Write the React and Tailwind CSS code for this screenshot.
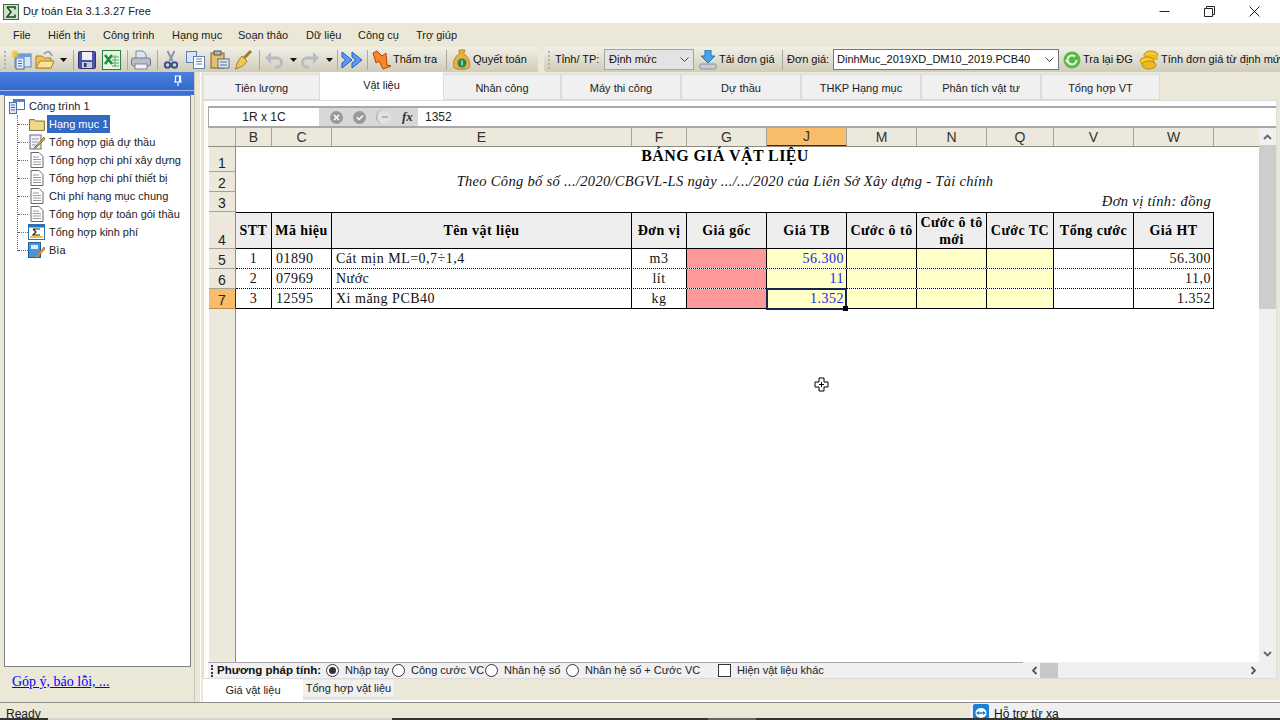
import React from "react";

const font = "font-['Liberation_Sans',Arial,sans-serif]";
const serif = "font-['Liberation_Serif','Times_New_Roman',serif]";

const Sigma = ({ s = 16 }) => (
  <svg width={s} height={s} viewBox="0 0 16 16"><rect x=".5" y=".5" width="15" height="15" fill="#cfe3c8" stroke="#3f6a3f" /><path d="M4 3h8v2.5M4 3l4 5-4 5h8v-2.5" fill="none" stroke="#1f4d1f" strokeWidth="1.6" /></svg>
);
const NewDoc = () => (
  <svg width="22" height="20" viewBox="0 0 22 20"><rect x="5" y="4" width="16" height="13" fill="#d8e6f5" stroke="#5f86b8" /><rect x="5" y="4" width="16" height="3" fill="#6f9bd0" /><rect x="6" y="8" width="8" height="11" fill="#e8f0fa" stroke="#3f6aa8" /><path d="M8 11h4M8 13.500h4M8 16h4" stroke="#3f6aa8" /><path d="M5 0v8M1 4h8M2 1l6 6M8 1L2 7" stroke="#f5c432" strokeWidth="1.200" /></svg>
);
const OpenFolder = () => (
  <svg width="20" height="20" viewBox="0 0 20 20"><path d="M1 6h6l2 2h7v10H1z" fill="#f0c35a" stroke="#a9802a" /><path d="M1 18l4-7h14l-3 7z" fill="#fbe39a" stroke="#a9802a" /><path d="M9 4c2-3 6-3 7 0l1 2" fill="none" stroke="#7e94a9" strokeWidth="1.400" /></svg>
);
const Caret = ({ c = "#111" }) => (
  <svg width="7" height="4" viewBox="0 0 7 4"><path d="M0 0h7L3.500 4z" fill={c} /></svg>
);
const Save = () => (
  <svg width="18" height="18" viewBox="0 0 18 18"><rect x=".5" y=".5" width="17" height="17" rx="1" fill="#4a55a8" stroke="#2d3370" /><rect x="4" y="1" width="10" height="8" fill="#eef1fa" /><rect x="4" y="11" width="10" height="6" fill="#c6cbd4" /><rect x="6" y="12" width="2.500" height="4" fill="#2d3370" /></svg>
);
const Excel = () => (
  <svg width="20" height="20" viewBox="0 0 20 20"><rect x="1.500" y=".5" width="18" height="19" fill="#e7f4e4" stroke="#2d7d3c" /><path d="M11 7h7M11 10h7M11 13h7M11 16h7M14 5v12" stroke="#5aa868" /><path d="M4 5l7 9M11 5l-7 9" stroke="#1f8a3b" strokeWidth="2.600" /></svg>
);
const Printer = () => (
  <svg width="20" height="20" viewBox="0 0 20 20"><path d="M5 1h7l3 3v5H5z" fill="#d9e6f5" stroke="#7d8795" /><rect x=".5" y="8" width="19" height="8" rx="2" fill="#b9c0ca" stroke="#6f7886" /><rect x="4" y="14" width="12" height="5" fill="#f2f3f5" stroke="#7d8795" /></svg>
);
const Cut = () => (
  <svg width="14" height="20" viewBox="0 0 14 20"><path d="M3.500 1l5 10M10.500 1l-5 10" stroke="#8b95a3" strokeWidth="2" /><circle cx="3.500" cy="15" r="2.800" fill="none" stroke="#35508f" strokeWidth="2" /><circle cx="10.500" cy="15" r="2.800" fill="none" stroke="#35508f" strokeWidth="2" /></svg>
);
const Copy = () => (
  <svg width="19" height="18" viewBox="0 0 19 18"><rect x=".5" y=".5" width="10" height="11" fill="#d9e5f5" stroke="#5f7fb5" /><rect x="7.500" y="5.500" width="11" height="12" fill="#fff" stroke="#5f7fb5" /><path d="M10 8h6M10 10.500h6M10 13h6" stroke="#5f7fb5" /></svg>
);
const Paste = () => (
  <svg width="20" height="20" viewBox="0 0 20 20"><rect x="1" y="3" width="13" height="15" fill="#e4bf6c" stroke="#7c6231" /><rect x="4" y="1" width="7" height="4" fill="#b5b5b5" stroke="#555" /><rect x="8" y="9" width="11" height="9" fill="#dfe7f2" stroke="#5a6a80" /><path d="M10 12h7M10 15h7" stroke="#5a6a80" /></svg>
);
const Broom = () => (
  <svg width="19" height="20" viewBox="0 0 19 20"><path d="M17 1l-7 7" stroke="#a37a2c" strokeWidth="3" /><path d="M8 6l5 5c-2 4-7 7-12 8 2-2 1-3 2-5 1-3 3-6 5-8z" fill="#efc94f" stroke="#a37a2c" /></svg>
);
const Undo = ({ flip }) => (
  <svg width="20" height="18" viewBox="0 0 20 18" style={flip ? { transform: "scaleX(-1)" } : undefined}><path d="M6 7h7a4.500 4.500 0 0 1 0 9h-2" fill="none" stroke="#b7bcc4" strokeWidth="3" /><path d="M7 1v12L1 7z" fill="#b7bcc4" /></svg>
);
const Forward = () => (
  <svg width="22" height="18" viewBox="0 0 22 18"><path d="M1 1l10 8-10 8v-5l4-3-4-3zM11 1l10 8-10 8v-5l4-3-4-3z" fill="#5b9df0" stroke="#1d5cc0" /></svg>
);
const Arrow = () => (
  <svg width="20" height="20" viewBox="0 0 20 20"><path d="M1 3l4-2 5 5 4-3 1 12 4 1-8 3-4-8-3 2z" fill="#f58a25" stroke="#c23a18" /></svg>
);
const Bag = () => (
  <svg width="18" height="22" viewBox="0 0 18 22"><path d="M6 1h6l-1.500 4 2 1c3 3 5 8 4 12-1 3-15 3-16 0-1-4 1-9 4-12l2-1z" fill="#e9b23f" stroke="#b5832a" /><circle cx="9" cy="14" r="4.500" fill="#1f8a4d" /><path d="M9 11.500v5" stroke="#fff" /></svg>
);
const Download = () => (
  <svg width="18" height="20" viewBox="0 0 18 20"><path d="M6 0h6v6h4l-7 7-7-7h4z" fill="#4aa6e8" stroke="#2274b8" /><rect x="1" y="14" width="16" height="5" rx="1" fill="#c9cdd2" stroke="#8a9098" /></svg>
);
const Refresh = () => (
  <svg width="18" height="18" viewBox="0 0 18 18"><circle cx="9" cy="9" r="8.500" fill="#58b948" /><path d="M13.500 9a4.500 4.500 0 1 1-1.500-3.400" fill="none" stroke="#e8f7e0" strokeWidth="2" /><path d="M2 9l4 0-2 3z" fill="#e8f7e0" /></svg>
);
const Coins = () => (
  <svg width="20" height="20" viewBox="0 0 20 20"><ellipse cx="12" cy="5" rx="7" ry="4" fill="#f5c92f" stroke="#c08a12" /><rect x="5" y="5" width="14" height="5" fill="#eeb820" /><ellipse cx="8" cy="11" rx="7" ry="4" fill="#f5c92f" stroke="#c08a12" /><ellipse cx="10" cy="15" rx="7" ry="4" fill="#eeb820" stroke="#c08a12" /></svg>
);

const Sep = () => <div className="w-px h-5 border-l border-[#aaa8a0] mx-[3px] shrink-0" />;
const Grip = () => <div className="w-[3px] h-[18px] mx-[3px] shrink-0 border-l-2 border-dotted border-[#b5b3a8]" />;

const Pin = () => (
  <svg width="10" height="12" viewBox="0 0 10 12"><path d="M2.500 1h5v6h-5zM1 7h8M5 7v4" fill="none" stroke="#fff" strokeWidth="1.200" /><path d="M6 1h1.500v6H6z" fill="#fff" /></svg>
);

const DocIcon = () => (
  <svg width="14" height="16" viewBox="0 0 14 16"><path d="M1 .5h8l4 4v11H1z" fill="#fff" stroke="#666" /><path d="M3 5h6M3 7.500h8M3 10h8M3 12.500h8" stroke="#999" /></svg>
);
const NoteIcon = () => (
  <svg width="16" height="16" viewBox="0 0 16 16"><rect x="1" y="1" width="11" height="14" fill="#eef1f7" stroke="#667" /><path d="M3 5h7M3 8h6M3 11h4" stroke="#99a" /><path d="M15 3L7 12l-2 2 3-1 8-8z" fill="#d9a73a" stroke="#6a5a20" strokeWidth=".7" /></svg>
);
const SigmaIcon = () => (
  <svg width="17" height="16" viewBox="0 0 17 16"><rect x=".5" y=".5" width="16" height="15" fill="#fff" stroke="#2a72b8" /><rect x=".5" y=".5" width="16" height="3" fill="#2a72b8" /><rect x="2" y="12" width="13" height="2" fill="#f1c14a" /><path d="M5 5h7M5 5l3 3-3 3h7" fill="none" stroke="#222" strokeWidth="1.200" /></svg>
);
const CoverIcon = () => (
  <svg width="17" height="17" viewBox="0 0 17 17"><rect x=".5" y=".5" width="12" height="15" fill="#4d94d6" stroke="#1f5fa0" /><rect x="3" y="3" width="7" height="4" fill="#d8ecfb" /><path d="M16 5L8 14l-2 2 3-.5 8-8.500z" fill="#eea02e" stroke="#9c5c12" strokeWidth=".7" /></svg>
);
const FolderIcon = () => (
  <svg width="16" height="13" viewBox="0 0 16 13"><path d="M.5 1.500h5l1 1.500h9v9.500H.5z" fill="#ecc65f" stroke="#8a7a48" /><rect x="1.500" y="4" width="13" height="7.500" fill="#f2d88b" /></svg>
);
const RootIcon = () => (
  <svg width="16" height="15" viewBox="0 0 16 15"><rect x="4.500" y=".5" width="11" height="10" fill="#fff" stroke="#4c72ae" /><rect x="4.500" y=".5" width="11" height="2.500" fill="#5a84c2" /><rect x=".5" y="3.500" width="7" height="11" fill="#dce8f7" stroke="#4c72ae" /><path d="M2 6h4M2 8.500h4M2 11h4" stroke="#4c72ae" /></svg>
);

const treeItems = [
  ["Hạng mục 1", <FolderIcon />],
  ["Tổng hợp giá dự thầu", <NoteIcon />],
  ["Tổng hợp chi phí xây dựng", <DocIcon />],
  ["Tổng hợp chi phí thiết bị", <DocIcon />],
  ["Chi phí hạng mục chung", <DocIcon />],
  ["Tổng hợp dự toán gói thầu", <DocIcon />],
  ["Tổng hợp kinh phí", <SigmaIcon />],
  ["Bìa", <CoverIcon />],
];

const menus = [["File", "w-[35px]"], ["Hiển thị", "w-[55px]"], ["Công trình", "w-[69px]"], ["Hạng mục", "w-[66px]"], ["Soạn thảo", "w-[68px]"], ["Dữ liệu", "w-[52px]"], ["Công cụ", "w-[58px]"], ["Trợ giúp", "w-[50px]"]];

const tabs = ["Tiên lượng", "Vật liệu", "Nhân công", "Máy thi công", "Dự thầu", "THKP Hạng mục", "Phân tích vật tư", "Tổng hợp VT"];
const tabW = ["w-[117px]", "w-[123px]", "w-[118px]", "w-[120px]", "w-[120px]", "w-[120px]", "w-[120px]", "w-[119px]"];

const cols = ["B", "C", "E", "F", "G", "J", "M", "N", "Q", "V", "W"];
const colW = ["w-[36px]", "w-[60px]", "w-[300px]", "w-[55px]", "w-[80px]", "w-[80px]", "w-[70px]", "w-[70px]", "w-[67px]", "w-[80px]", "w-[80px]"];
const heads = ["STT", "Mã hiệu", "Tên vật liệu", "Đơn vị", "Giá gốc", "Giá TB", "Cước ô tô", "Cước ô tô mới", "Cước TC", "Tổng cước", "Giá HT"];
const rows = [
  ["1", "01890", "Cát mịn ML=0,7÷1,4", "m3", "56.300", "56.300"],
  ["2", "07969", "Nước", "lít", "11", "11,0"],
  ["3", "12595", "Xi măng PCB40", "kg", "1.352", "1.352"],
];

const RowNum = ({ n, h, active }) => (
  <div className={`${h} w-[27px] shrink-0 flex items-end justify-center border-b border-r ${font} text-[14px] leading-[16px] text-[#222] ${active ? "bg-[#f9bc68] border-[#c08a40] border-r-[#1a2a80]" : "bg-[#ece9dc] border-[#a5a297] border-r-[#8f8d83]"}`}>{n}</div>
);

const Cell = ({ w, bg = "", cls = "", children }) => (
  <div className={`${w} shrink-0 h-full flex items-center overflow-hidden whitespace-nowrap border-r border-black ${bg} ${cls}`}>{children}</div>
);

function Radio({ on, label, w }) {
  return (
    <div className={`flex items-center shrink-0 ${w}`}>
      <span className="w-[13px] h-[13px] rounded-full border border-[#333] bg-white flex items-center justify-center shrink-0">
        {on && <span className="w-[7px] h-[7px] rounded-full bg-[#333]" />}
      </span>
      <span className="ml-[6px] text-[#222] whitespace-nowrap">{label}</span>
    </div>
  );
}

export default function App() {
  return (
    <div className={`${font} w-[1280px] h-[720px] overflow-hidden flex flex-col bg-[#ebe8d8] text-[11px] text-[#111] select-none`}>
      {/* Title bar */}
      <div className="h-[23px] shrink-0 bg-white flex items-center pl-[3px]">
        <Sigma />
        <span className="ml-[4px] text-[#222]">Dự toán Eta 3.1.3.27 Free</span>
        <div className="ml-auto flex items-center pr-[3px]">
          <div className="w-[45px] flex justify-center"><svg width="11" height="11" viewBox="0 0 11 11"><path d="M.5 5.500h10" stroke="#222" /></svg></div>
          <div className="w-[45px] flex justify-center"><svg width="11" height="11" viewBox="0 0 11 11"><path d="M.5 2.500h8v8h-8zM2.500 2.500v-2h8v8h-2" fill="none" stroke="#222" /></svg></div>
          <div className="w-[45px] flex justify-center"><svg width="11" height="11" viewBox="0 0 11 11"><path d="M.5.500l10 10M10.500.500l-10 10" stroke="#222" /></svg></div>
        </div>
      </div>

      {/* Menu bar */}
      <div className="h-[24px] shrink-0 flex items-center pl-[13px] text-[#1a1a1a]">
        {menus.map(([m, w]) => <span key={m} className={`${w} whitespace-nowrap`}>{m}</span>)}
      </div>

      {/* Toolbar */}
      <div className="h-[25px] shrink-0 flex items-stretch">
        <div className="w-[538px] shrink-0 rounded-tr-[3px] flex items-center whitespace-nowrap pl-[1px] bg-gradient-to-b from-[#f2f0e6] to-[#cfccba] [&>*]:shrink-0">
          <Grip />
          <NewDoc />
          <div className="ml-[3px]"><OpenFolder /></div>
          <div className="ml-[5px]"><Caret /></div>
          <div className="ml-[3px]"><Sep /></div>
          <div className="ml-[1px]"><Save /></div>
          <div className="ml-[5px]"><Excel /></div>
          <div className="ml-[3px]"><Sep /></div>
          <Printer />
          <div className="ml-[3px]"><Sep /></div>
          <div className="ml-[3px]"><Cut /></div>
          <div className="ml-[8px]"><Copy /></div>
          <div className="ml-[5px]"><Paste /></div>
          <div className="ml-[4px]"><Broom /></div>
          <div className="ml-[3px]"><Sep /></div>
          <div className="ml-[1px]"><Undo /></div>
          <div className="ml-[6px]"><Caret /></div>
          <div className="ml-[3px]"><Undo flip /></div>
          <div className="ml-[6px]"><Caret /></div>
          <div className="ml-[1px]"><Sep /></div>
          <Forward />
          <div className="ml-[1px]"><Sep /></div>
          <div className="ml-[1px]"><Arrow /></div>
          <span className="ml-[1px]">Thẩm tra</span>
          <div className="ml-[6px]"><Sep /></div>
          <div className="ml-[3px]"><Bag /></div>
          <span className="ml-[2px]">Quyết toán</span>
        </div>
        <div className="ml-[6px] flex-1 min-w-0 rounded-l-[3px] flex items-center overflow-hidden whitespace-nowrap pl-[1px] bg-gradient-to-b from-[#f2f0e6] to-[#cfccba] [&>*]:shrink-0">
          <Grip />
          <span className="ml-[1px] w-[43px]">Tỉnh/ TP:</span>
          <div className="ml-[6px] w-[90px] h-[21px] flex items-center justify-between px-[4px] bg-[#e3e3e3] border border-[#a5a5a5]">
            <span>Định mức</span>
            <svg width="9" height="6" viewBox="0 0 9 6"><path d="M.5.500l4 4 4-4" fill="none" stroke="#444" /></svg>
          </div>
          <div className="ml-[5px]"><Download /></div>
          <span className="ml-[2px] w-[52px]">Tải đơn giá</span>
          <div className="ml-[8px]"><Sep /></div>
          <span className="ml-[1px] w-[40px]">Đơn giá:</span>
          <div className="ml-[6px] w-[226px] h-[21px] flex items-center justify-between pl-[3px] pr-[4px] bg-white border border-[#777]">
            <span>DinhMuc_2019XD_DM10_2019.PCB40</span>
            <svg width="9" height="6" viewBox="0 0 9 6"><path d="M.5.500l4 4 4-4" fill="none" stroke="#444" /></svg>
          </div>
          <div className="ml-[4px]"><Refresh /></div>
          <span className="ml-[2px] w-[48px]">Tra lại ĐG</span>
          <div className="ml-[8px]"><Coins /></div>
          <span className="ml-[2px]">Tính đơn giá từ định mức</span>
        </div>
      </div>

      {/* Main */}
      <div className="flex-1 min-h-0 flex border-b border-[#8f8f8f]">
        {/* Left panel */}
        <div className="w-[195px] shrink-0 flex flex-col border-r border-[#c9c7ba]">
          <div className="h-[18px] shrink-0 bg-gradient-to-b from-[#4a80de] to-[#3369cc] flex items-center justify-end pr-[11px]"><Pin /></div>
          <div className="h-[1px] shrink-0 bg-[#9db8e8]" />
          <div className="h-[4px] shrink-0 bg-[#3a6fd8]" />
          <div className="flex-1 min-h-0 ml-[4px] mr-[3px] bg-white border border-[#808080] pt-[1px] pl-[4px] text-[#222]">
            <div className="flex items-center h-[18px]">
              <RootIcon />
              <span className="ml-[4px]">Công trình 1</span>
            </div>
            <div className="ml-[8px] border-l border-dotted border-[#666] h-[136px] flex flex-col">
              {treeItems.map(([label, icon], i) => (
                <div key={label} className="h-[18px] shrink-0 flex items-center">
                  <div className="w-[10px] border-t border-dotted border-[#666] shrink-0" />
                  <div className="w-[17px] flex justify-center shrink-0">{icon}</div>
                  <span className={`ml-[2px] leading-[18px] px-[2px] whitespace-nowrap ${i === 0 ? "bg-[#316ac5] text-white" : ""}`}>{label}</span>
                </div>
              ))}
            </div>
          </div>
          <div className={`h-[35px] shrink-0 flex items-start pt-[6px] pl-[12px] ${serif} text-[14px] leading-[18px] text-[#0000ff] underline`}>Góp ý, báo lỗi, ...</div>
        </div>

        {/* Right panel */}
        <div className="flex-1 min-w-0 ml-[5px] flex flex-col pt-[2px] border-l border-white pl-[2px]">
          {/* Tabs */}
          <div className="h-[26px] shrink-0 flex items-stretch">
            {tabs.map((t, i) => (
              i === 1
                ? <div key={t} className={`${tabW[i]} -mt-[2px] h-[28px] pb-[2px] bg-white flex items-center justify-center text-[#222]`}>{t}</div>
                : <div key={t} className={`${tabW[i]} bg-[#f0f0f0] border border-[#dcdcdc] pt-[2px] flex items-center justify-center text-[#222]`}>{t}</div>
            ))}
          </div>

          {/* Workbook */}
          <div className="flex-1 min-h-0 mr-[3px] bg-white border border-[#dcdcdc] flex flex-col">
            <div className="flex-1 min-h-0 flex flex-col pl-[4px] pt-[5px]">
              {/* Formula bar */}
              <div className="h-[22px] shrink-0 flex items-stretch border-t-2 border-b-2 border-[#a8a8a8]">
                <div className="w-[111px] shrink-0 flex items-center justify-center bg-white border-l border-[#a8a8a8] text-[12px] text-[#222]">1R x 1C</div>
                <div className="w-[99px] shrink-0 bg-[#d8d8d8] flex items-center pl-[11px]">
                  <span className="w-[13px] h-[13px] rounded-full bg-[#9a9a9a] flex items-center justify-center">
                    <svg width="7" height="7" viewBox="0 0 7 7"><path d="M1 1l5 5M6 1L1 6" stroke="#fff" strokeWidth="1.500" /></svg>
                  </span>
                  <span className="ml-[10px] w-[13px] h-[13px] rounded-full bg-[#9a9a9a] flex items-center justify-center">
                    <svg width="8" height="7" viewBox="0 0 8 7"><path d="M1 3.500l2 2 4-4" fill="none" stroke="#fff" strokeWidth="1.500" /></svg>
                  </span>
                  <span className="ml-[10px] w-[16px] h-[16px] rounded-full border-l border-[#aaa] flex items-center justify-center">
                    <span className="w-[13px] h-[13px] rounded-full bg-[#e2e2e2] flex items-center justify-center"><span className="w-[6px] h-[2px] bg-[#b5b5b5]" /></span>
                  </span>
                  <span className={`ml-[10px] ${serif} italic font-bold text-[13px] text-[#333]`}>fx</span>
                </div>
                <div className="flex-1 min-w-0 bg-white flex items-center pl-[7px] text-[12px] text-[#222]">1352</div>
              </div>

              {/* Sheet */}
              <div className="flex-1 min-h-0 flex">
                <div className="flex-1 min-w-0 flex flex-col">
                  {/* Column headers */}
                  <div className="h-[19px] shrink-0 flex bg-[#ece9dc] border-b border-[#8f8d83] text-[14px] text-[#333]">
                    <div className="w-[27px] shrink-0 border-r border-[#a5a297] ml-[1px]" />
                    {cols.map((c, i) => (
                      <div key={c} className={`${colW[i]} shrink-0 flex items-center justify-center border-r border-[#a5a297] ${c === "J" ? "bg-[#f9bc68] border-b border-b-[#1a2a80]" : ""}`}>{c}</div>
                    ))}
                  </div>

                  <div className={`flex-1 min-h-0 flex flex-col pl-[1px] ${serif}`}>
                    {/* Title rows */}
                    <div className="h-[25px] shrink-0 flex">
                      <RowNum n="1" h="h-[25px]" />
                      <div className="w-[978px] shrink-0 text-center font-bold text-[16px] leading-[18px] text-black tracking-[0.4px]">BẢNG GIÁ VẬT LIỆU</div>
                    </div>
                    <div className="h-[20px] shrink-0 flex">
                      <RowNum n="2" h="h-[20px]" />
                      <div className="w-[978px] shrink-0 text-center italic text-[14.500px] leading-[18px] text-[#111] tracking-[0.32px] whitespace-nowrap">Theo Công bố số .../2020/CBGVL-LS ngày .../.../2020 của Liên Sở Xây dựng - Tài chính</div>
                    </div>
                    <div className="h-[20px] shrink-0 flex">
                      <RowNum n="3" h="h-[20px]" />
                      <div className="w-[978px] shrink-0 text-right italic text-[14.500px] leading-[19px] pr-[3px] text-[#111] tracking-[0.35px]">Đơn vị tính: đồng</div>
                    </div>

                    {/* Header row */}
                    <div className="h-[37px] shrink-0 flex">
                      <RowNum n="4" h="h-[37px]" />
                      <div className="flex border-t border-b border-black h-[37px]">
                        {heads.map((h, i) => (
                          <div key={h} className={`${colW[i]} shrink-0 h-full flex items-center justify-center text-center bg-[#eeeeee] border-r border-black font-bold text-[14px] leading-[17px] text-black tracking-[0.45px]`}>{h}</div>
                        ))}
                      </div>
                    </div>

                    {/* Data rows */}
                    {rows.map((r, idx) => (
                      <div key={r[0]} className="h-[20px] shrink-0 flex">
                        <RowNum n={String(5 + idx)} h="h-[20px]" active={idx === 2} />
                        <div className={`flex h-[20px] border-b ${idx === 2 ? "border-black" : "border-dotted border-black"} text-[14px] text-[#111] tracking-[0.5px]`}>
                          <Cell w={colW[0]} cls="justify-center">{r[0]}</Cell>
                          <Cell w={colW[1]} cls="pl-[4px]">{r[1]}</Cell>
                          <Cell w={colW[2]} cls="pl-[4px]">{r[2]}</Cell>
                          <Cell w={colW[3]} cls="justify-center">{r[3]}</Cell>
                          <Cell w={colW[4]} bg="bg-[#ff9999]" />
                          <div className={`${colW[5]} shrink-0 h-full relative flex items-center justify-end pr-[2px] border-r border-black bg-[#ffffc8] text-[#2222ee]`}>
                            {r[4]}
                            {idx === 2 && <div className="absolute left-[-1px] right-[-1px] top-[-1px] bottom-[-2px] border-2 border-[#14244f]"><div className="absolute right-[-3px] bottom-[-3px] w-[5px] h-[5px] bg-black" /></div>}
                          </div>
                          <Cell w={colW[6]} bg="bg-[#ffffc8]" />
                          <Cell w={colW[7]} bg="bg-[#ffffc8]" />
                          <Cell w={colW[8]} bg="bg-[#ffffc8]" />
                          <Cell w={colW[9]} />
                          <Cell w={colW[10]} cls="justify-end pr-[2px]">{r[5]}</Cell>
                        </div>
                      </div>
                    ))}

                    {/* Empty rows */}
                    <div className="flex-1 min-h-0 flex">
                      <div className="w-[27px] shrink-0 bg-[#ece9dc] border-r border-[#8f8d83]" />
                    </div>
                  </div>
                </div>

                {/* Vertical scrollbar */}
                <div className="w-[17px] shrink-0 bg-[#f0f0f0] flex flex-col items-center">
                  <div className="h-[17px] shrink-0 flex items-center"><svg width="9" height="6" viewBox="0 0 9 6"><path d="M1 5l3.500-3.500L8 5" fill="none" stroke="#666" strokeWidth="1.800" /></svg></div>
                  <div className="w-full h-[164px] shrink-0 bg-[#cdcdcd]" />
                  <div className="mt-auto h-[17px] shrink-0 flex items-center"><svg width="9" height="6" viewBox="0 0 9 6"><path d="M1 1l3.500 3.500L8 1" fill="none" stroke="#666" strokeWidth="1.800" /></svg></div>
                </div>
              </div>

              {/* Options bar */}
              <div className="h-[16px] shrink-0 flex items-stretch bg-[#f0f0f0] whitespace-nowrap">
                <div className="w-[815px] shrink-0 flex items-center border-t border-[#a8a8a8]">
                  <div className="w-[3px] h-[12px] ml-[3px] shrink-0 border-l-2 border-dotted border-[#335]" />
                  <span className="ml-[3px] w-[106px] shrink-0 font-bold text-[11.500px] text-[#111]">Phương pháp tính:</span>
                  <div className="ml-[3px] flex items-center">
                    <Radio on label="Nhập tay" w="w-[66px]" />
                    <Radio label="Công cước VC" w="w-[93px]" />
                    <Radio label="Nhân hệ số" w="w-[81px]" />
                    <Radio label="Nhân hệ số + Cước VC" w="w-[145px]" />
                  </div>
                  <span className="ml-[7px] w-[13px] h-[13px] border border-[#333] bg-white shrink-0" />
                  <span className="ml-[6px] text-[#222]">Hiện vật liệu khác</span>
                </div>
                <div className="flex-1 min-w-0 flex items-center pl-[8px]">
                  <svg width="7" height="9" viewBox="0 0 7 9"><path d="M5.500 1L2 4.500 5.500 8" fill="none" stroke="#555" strokeWidth="1.800" /></svg>
                  <div className="ml-[2px] w-[18px] h-[15px] bg-[#c8c8c8]" />
                  <svg className="ml-[192px]" width="7" height="9" viewBox="0 0 7 9"><path d="M1.500 1L5 4.500 1.500 8" fill="none" stroke="#555" strokeWidth="1.800" /></svg>
                </div>
              </div>
            </div>
          </div>

          {/* Sheet tabs */}
          <div className="h-[21px] shrink-0 flex items-start">
            <div className="w-[100px] h-[21px] bg-white flex items-center justify-center pt-[2px] text-[#222] whitespace-nowrap">Giá vật liệu</div>
            <div className="w-[91px] h-[18px] mt-[1px] bg-[#f0f0f0] border-b border-[#dcdcdc] flex items-center justify-center text-[#222] whitespace-nowrap">Tổng hợp vật liệu</div>
          </div>
          <div className="h-[2px] shrink-0 bg-white" />
        </div>
      </div>

      {/* Status bar */}
      <div className="h-[15px] shrink-0 flex overflow-hidden">
        <span className="pl-[6px] pt-[4px] leading-[14px] text-[12px] text-[#222]">Ready</span>
        <div className="ml-auto w-[310px] bg-[#f0f0f0] pl-[3px] pt-[1px] flex items-start">
          <svg width="16" height="16" viewBox="0 0 16 16"><rect width="16" height="16" rx="2" fill="#1782d8" /><ellipse cx="8" cy="9" rx="5.500" ry="5" fill="#fff" /><path d="M3 9l3-2v1.200h4V7l3 2-3 2V9.800H6V11z" fill="#1782d8" /></svg>
          <span className="ml-[5px] leading-[14px] pt-[3px] text-[12px] text-[#111]">Hỗ trợ từ xa</span>
        </div>
      </div>

      {/* Bottom strip */}
      <div className="h-[2px] shrink-0 flex bg-[#333]">
        <div className="w-[48px]" />
        <div className="w-[344px] bg-[#d4d4d4]" />
        <div className="w-[316px]" />
        <div className="w-[48px] bg-[#666]" />
      </div>

      {/* Cursor */}
      <div className="fixed left-[814px] top-[377px] pointer-events-none">
        <svg width="15" height="15" viewBox="0 0 15 15"><path d="M5 1h5v4h4v5h-4v4H5v-4H1V5h4z" fill="#fff" stroke="#000" /><path d="M7.500 5v5M5 7.500h5" stroke="#000" /></svg>
      </div>
    </div>
  );
}
